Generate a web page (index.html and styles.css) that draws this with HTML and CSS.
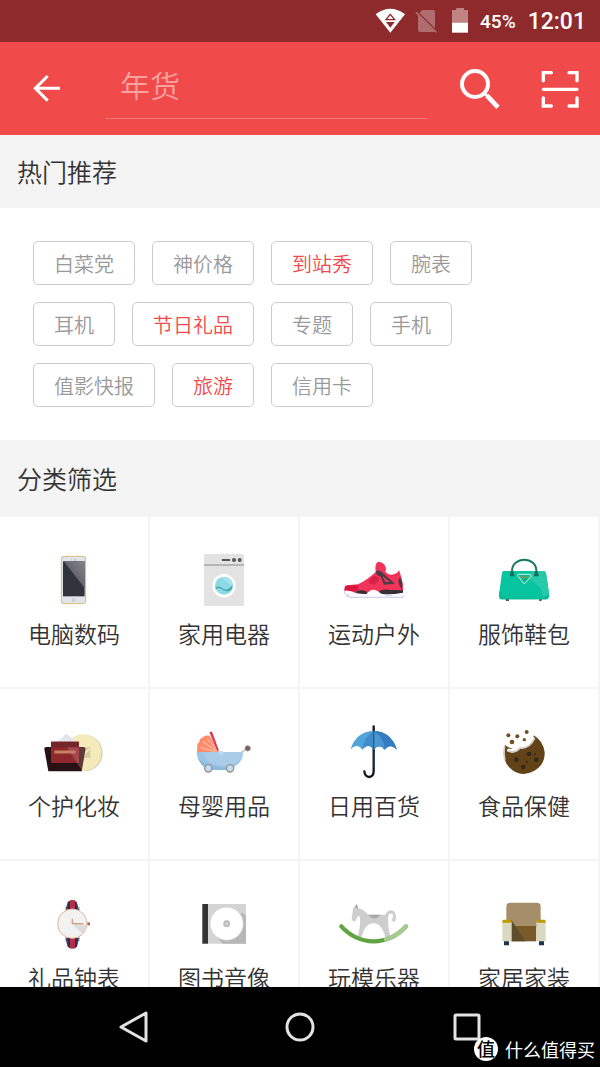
FILE: index.html
```html
<!DOCTYPE html>
<html lang="zh-CN">
<head>
<meta charset="utf-8">
<meta name="viewport" content="width=device-width, initial-scale=1">
<title>搜索</title>
<link rel="stylesheet" href="styles.css">
</head>
<body>
<div class="app">
  <div class="status">
    <svg class="status-wifi" viewBox="42 24 90 78" aria-hidden="true"><path d="M44 43Q88 10 132 43L88 98Z" fill="#fff"/><path d="M88 43L101 59H75Z" fill="#fff" stroke="#8e2a2c" stroke-width="4"/><path d="M75 66H101L88 83Z" fill="#8e2a2c"/></svg>
    <svg class="status-sim" viewBox="162 24 69 78" aria-hidden="true"><path d="M184 30H217Q222 30 222 35V85L175 39Z M171 45L221 94Q219 96 216 96H177Q171 96 171 90Z" fill="#b06d6f"/><path d="M165 37L226 97" stroke="#b06d6f" stroke-width="5"/></svg>
    <svg class="status-battery" viewBox="270 24 54 78" aria-hidden="true"><path d="M286 24H309V30H321V68H273V30H286Z" fill="#c18484"/><path d="M273 68H321V98H273Z" fill="#fff"/></svg>
    <span class="status-percent">45%</span>
    <span class="status-time">12:01</span>
  </div>
  <header class="toolbar">
    <button class="icon-button" aria-label="返回"><svg class="icon-back" viewBox="99 102 84 87"><path d="M180 145H107M143 108L106 145L143 182" fill="none" stroke="#fff" stroke-width="9"/></svg></button>
    <input class="search" type="text" placeholder="年货" aria-label="搜索">
    <button class="icon-button icon-button-search" aria-label="搜索"><svg class="icon-search" viewBox="297 201 126 126"><circle cx="345" cy="249" r="39" fill="none" stroke="#fff" stroke-width="12"/><path d="M374 278L383 286" stroke="#fff" stroke-width="9"/><path d="M381 284L414 319" stroke="#fff" stroke-width="14"/></svg></button>
    <button class="icon-button" aria-label="扫一扫"><svg class="icon-scan" viewBox="540 204 120 120"><path d="M550 239V215H574M627 215H651V239M550 291V315H574M627 315H651V291M550 265H651" fill="none" stroke="#fff" stroke-width="10" stroke-linecap="round"/></svg></button>
  </header>
  <main class="content">
    <h2 class="section-title">热门推荐</h2>
    <div class="tags">
      <div class="tag-row"><button class="tag">白菜党</button><button class="tag">神价格</button><button class="tag tag-hot">到站秀</button><button class="tag">腕表</button></div>
      <div class="tag-row"><button class="tag">耳机</button><button class="tag tag-hot">节日礼品</button><button class="tag">专题</button><button class="tag">手机</button></div>
      <div class="tag-row"><button class="tag">值影快报</button><button class="tag tag-hot">旅游</button><button class="tag">信用卡</button></div>
    </div>
    <h2 class="section-title section-title-tall">分类筛选</h2>
    <div class="grid">
      <a class="cell" href="#"><svg class="cell-icon" viewBox="114 60 216 180" aria-hidden="true">
        <defs><linearGradient id="glare" x1="0" y1="1" x2="1" y2="0"><stop offset="0" stop-color="#45474f"/><stop offset="1" stop-color="#85868b"/></linearGradient></defs>
        <rect x="184" y="79" width="73" height="142" rx="7" fill="#e3e4ea" stroke="#d7bd78" stroke-width="3"/><rect x="189" y="94" width="65" height="105" fill="#30333c"/><path d="M191 94H254V174Z" fill="url(#glare)"/><path d="M213 90H216M221 90H231" stroke="#c3c4ca" stroke-width="4"/><rect x="217" y="206" width="8" height="8" fill="#dfe0e5" stroke="#bfc0c6" stroke-width="2"/></svg><span>电脑数码</span></a>
      <a class="cell" href="#"><svg class="cell-icon" viewBox="564 60 216 180" aria-hidden="true">
        <rect x="612" y="72" width="120" height="156" rx="6" fill="#e3e3e3"/><path d="M612 105H732" stroke="#b5b6b5" stroke-width="6"/><path d="M668 90H688" stroke="#56584c" stroke-width="6" stroke-linecap="round"/><circle cx="702" cy="90" r="6" fill="#56584c"/><circle cx="719" cy="90" r="6" fill="#56584c"/><circle cx="672" cy="167" r="35" fill="#fff"/><circle cx="672" cy="167" r="27" fill="#8dd9e6"/><path d="M662 142Q690 136 697 158Q697 171 695 168Z" fill="#a7e2eb"/><path d="M646 173Q656 164 670 176Q682 184 697 165L696 178Q685 189 670 181Q659 171 647 178Z" fill="#4fa7b4"/></svg><span>家用电器</span></a>
      <a class="cell" href="#"><svg class="cell-icon" viewBox="114 60 216 180" aria-hidden="true">
        <path d="M134 185Q131 168 141 166L174 163Q200 151 227 126Q223 96 237 95Q257 99 258 118L256 125Q264 134 273 134Q292 133 297 120Q304 139 309 163V191H134Z" fill="#f23459"/><path d="M137 167L174 165Q178 177 167 184H134Q132 174 137 167Z" fill="#d81842"/><path d="M207 151L219 139Q233 135 238 151L223 164L207 159Z" fill="#d82148"/><path d="M300 141L306 155V181L298 165Q292 151 300 141Z" fill="#483a44"/><path d="M227 126Q236 117 246 127L285 161L252 164L242 140L231 135Z" fill="#4b3d46"/><path d="M247 137L270 156L257 157Z" fill="#f23459"/><path d="M167 185Q184 177 198 184L203 193H174Z M235 187Q247 175 272 180L309 181V189L258 196Z" fill="#353038"/><path d="M134 182Q149 180 169 190L199 193Q208 178 223 179Q235 182 244 192Q276 195 309 188V204H145Q132 197 134 182Z" fill="#fbfaff"/><path d="M133 188Q138 201 151 202H309V195M256 196H276M140 195H149" fill="none" stroke="#cbc9ed" stroke-width="3"/></svg><span>运动户外</span></a>
      <a class="cell" href="#"><svg class="cell-icon" viewBox="564 60 216 180" aria-hidden="true">
        <path d="M616 205H627V213H618ZM717 205H727L724 213H718Z" fill="#54545a"/><path d="M611 123H731Q736 123 738 130L747 190Q748 208 738 208H606Q597 208 597 194L606 128Q607 123 611 123Z" fill="#06c49d"/><path d="M699 123H731Q736 123 738 130L747 190Q748 208 738 208H729Q732 174 690 150Z" fill="#27caa8"/><path d="M598 182L597 197Q597 208 606 208H738Q748 206 747 193Q732 204 710 205H625Q604 204 598 182Z" fill="#08b995"/><path d="M636 137V123C637 78 709 78 709 123V137" fill="none" stroke="#167a62" stroke-width="6"/><path d="M629 139L632 124H640L644 139ZM701 139L705 124H713L717 139Z" fill="#176f5a"/><path d="M653 136Q652 133 656 133H689Q695 133 693 139L676 159Q673 163 669 158Z" fill="#12b48f" stroke="#d3f6eb" stroke-width="3"/><path d="M660 142H686" stroke="#91a452" stroke-width="4" stroke-dasharray="4 2"/></svg><span>服饰鞋包</span></a>

      <a class="cell" href="#"><svg class="cell-icon" viewBox="114 35 216 180" aria-hidden="true">
        <circle cx="253" cy="128" r="55" fill="#d6ceb1"/><circle cx="249" cy="127" r="55" fill="#f5eab9"/><rect x="239" y="111" width="32" height="32" fill="#d9cda3"/><path d="M243 140L268 116" stroke="#f5eab9" stroke-width="5"/><path d="M167 95L189 81L195 70L203 74Q209 81 219 84L228 95Z" fill="#e9e8ed"/><path d="M190 87L202 75L213 90" fill="none" stroke="#d4d3da" stroke-width="3"/><path d="M133 116Q132 110 139 110H249Q257 110 256 117L245 183H145Z" fill="#281114"/><rect x="153" y="94" width="84" height="64" rx="3" fill="#8f282d"/><path d="M153 94H237V111H153Z" fill="#74272b"/><path d="M163 125H227" stroke="#ca7d67" stroke-width="9"/><path d="M201 111H256L245 180Z" fill="#c47c78" opacity=".38"/></svg><span>个护化妆</span></a>
      <a class="cell" href="#"><svg class="cell-icon" viewBox="564 35 216 180" aria-hidden="true">
        <path d="M591 125L592 108Q590 100 598 96Q598 84 607 82Q614 73 629 76L657 125Z" fill="#ff8b68"/><path d="M609 94L650 123M600 111L644 124M621 85L654 121" stroke="#ffb79f" stroke-width="4"/><path d="M628 65L636 64L657 121L651 120Z" fill="#d9364a"/><path d="M590 125H729C732 196 590 200 590 125Z" fill="#9bc5e4"/><path d="M609 125H729C726 182 617 177 609 125Z" fill="#a9cce8"/><path d="M595 145Q607 176 630 179H692L705 170Q644 179 595 145Z" fill="#8bbadf"/><path d="M723 127L738 117" stroke="#bfc9ce" stroke-width="5"/><circle cx="743" cy="114" r="8" fill="#71605d" stroke="#a69c98" stroke-width="3"/><circle cx="663" cy="128" r="7" fill="#badcf0"/><circle cx="625" cy="174" r="11" fill="#c2ddef" stroke="#9b9290" stroke-width="4"/><circle cx="690" cy="174" r="11" fill="#c2ddef" stroke="#9b9290" stroke-width="4"/></svg><span>母婴用品</span></a>
      <a class="cell" href="#"><svg class="cell-icon" viewBox="114 35 216 180" aria-hidden="true">
        <path d="M221 48V181Q221 199 207 200Q195 199 193 183" fill="none" stroke="#101722" stroke-width="7" stroke-linecap="round"/><path d="M151 118Q169 63 221 62Q273 63 291 118Q268 95 254 118Q238 96 221 118Q205 95 187 118Q171 96 151 118Z" fill="#51a4d8"/><path d="M221 62V118Q238 98 254 118Q270 97 291 118Q273 63 221 62Z" fill="#347bc0"/><path d="M221 62V118Q205 96 187 118Q192 80 221 62Z" fill="#3f8bcb"/><path d="M221 62V118Q238 98 254 118Q253 82 221 62Z" fill="#4b95d0"/><path d="M221 62V118" stroke="#275d91" stroke-width="4"/><path d="M222 122V173" stroke="#315d7a" stroke-width="2"/></svg><span>日用百货</span></a>
      <a class="cell" href="#"><svg class="cell-icon" viewBox="564 35 216 180" aria-hidden="true">
        <path d="M615 104Q604 145 626 169Q659 205 702 182Q735 163 734 126Q730 92 701 75Q701 103 665 107Q650 129 615 104Z" fill="#624317"/><path d="M622 118Q646 128 659 109Q685 114 701 81" fill="none" stroke="#fff" stroke-width="10"/><path d="M625 122Q645 130 660 113Q688 116 704 84M614 107Q610 130 615 150" fill="none" stroke="#d1cbc5" stroke-width="5"/><g fill="#70501e"><circle cx="625" cy="75" r="6"/><circle cx="652" cy="78" r="6"/><circle cx="680" cy="65" r="6"/><circle cx="673" cy="88" r="5"/><circle cx="636" cy="95" r="7"/></g><g fill="#352818"><circle cx="649" cy="148" r="7"/><circle cx="687" cy="131" r="7"/><circle cx="709" cy="148" r="7"/><circle cx="670" cy="170" r="7"/><circle cx="705" cy="132" r="3"/><circle cx="681" cy="154" r="3"/></g></svg><span>食品保健</span></a>

      <a class="cell" href="#"><svg class="cell-icon" viewBox="114 40 216 180" aria-hidden="true">
        <path d="M196 90L203 64Q217 53 230 64L238 90ZM196 171H238L231 198Q217 209 203 198Z" fill="#292d50"/><path d="M210 59H225V90H210ZM210 170H225V203H210Z" fill="#b72e46"/><path d="M204 67L201 85M230 67L233 84M201 176L205 195M233 176L230 195" stroke="#858bab" stroke-width="2" stroke-dasharray="2 3"/><path d="M197 78V95M238 78V95M197 165V182M238 165V182" stroke="#dfb393" stroke-width="3"/><circle cx="217" cy="129" r="44" fill="#f2f2f3" stroke="#e2b699" stroke-width="3"/><path d="M217 131L250 129L260 137Q257 148 247 159Z" fill="#dcdcde"/><path d="M217 114V129H250" fill="none" stroke="#d39b7c" stroke-width="4"/><path d="M262 125H270V134H262" fill="#b16e51"/></svg><span>礼品钟表</span></a>
      <a class="cell" href="#"><svg class="cell-icon" viewBox="564 40 216 180" aria-hidden="true">
        <path d="M607 70H738V189H607Z" fill="#d4d4d4"/><path d="M727 95L738 107V189H668L646 164Z" fill="#b7b7b7"/><path d="M607 70H624V189H607Z" fill="#343434"/><circle cx="680" cy="129" r="50" fill="#fff" stroke="#c8c8c8" stroke-width="2"/><circle cx="680" cy="129" r="8" fill="#d0d0d0" stroke="#b6b6b6" stroke-width="4"/></svg><span>图书音像</span></a>
      <a class="cell" href="#"><svg class="cell-icon" viewBox="114 40 216 180" aria-hidden="true">
        <path d="M173 169Q182 137 180 111Q173 100 168 120Q159 126 155 116L159 83L170 71L174 83Q190 84 204 102H255Q267 83 281 91Q294 104 284 125L274 119Q282 109 277 99Q265 96 264 112Q263 139 271 169L256 171Q247 129 221 128Q192 129 184 175Z" fill="#cecece"/><path d="M166 80L170 71L174 83Z" fill="#8f8f8f"/><path d="M204 102H241Q232 114 222 113Q212 113 204 102Z" fill="#a8a8a8"/><path d="M124 137Q164 181 221 182Q278 181 318 137" fill="none" stroke="#62a442" stroke-width="13" stroke-linecap="round"/><path d="M258 177Q295 165 318 137" fill="none" stroke="#a4cb90" stroke-width="13" stroke-linecap="round"/></svg><span>玩模乐器</span></a>
      <a class="cell" href="#"><svg class="cell-icon" viewBox="564 40 216 180" aria-hidden="true">
        <rect x="619" y="66" width="103" height="75" rx="12" fill="#a68e6a"/><path d="M634 136H709V182H634Z" fill="#795b28"/><path d="M634 118L677 182H634Z" fill="#5f4c2e"/><path d="M607 123H635V182H607ZM709 123H737V182H709Z" fill="#dad8c0"/><path d="M607 126V121Q607 117 612 117H632L635 126ZM709 126L712 117H733Q738 117 737 126Z" fill="#bd9b07"/><path d="M612 182H627V194H612ZM717 182H732V194H717Z" fill="#17364c"/></svg><span>家居家装</span></a>
    </div>
  </main>
  <nav class="navbar" aria-label="系统导航">
    <button class="nav-button" aria-label="返回"><svg class="nav-icon" viewBox="0 0 36 36"><path d="M31 4V32L6 18Z" fill="none" stroke="#e4e2e4" stroke-width="3" stroke-linejoin="round"/></svg></button>
    <button class="nav-button" aria-label="主屏幕"><svg class="nav-icon" viewBox="0 0 36 36"><circle cx="18" cy="18" r="13" fill="none" stroke="#e4e2e4" stroke-width="3"/></svg></button>
    <button class="nav-button" aria-label="最近任务"><svg class="nav-icon" viewBox="0 0 36 36"><rect x="6" y="6" width="24" height="24" rx="1" fill="none" stroke="#e4e2e4" stroke-width="3"/></svg></button>
    <div class="brand"><span class="brand-badge">值</span><span>什么值得买</span></div>
  </nav>
</div>
</body>
</html>
```
FILE: styles.css
```css
* { box-sizing: border-box; }
body { margin: 0; font-family: "Noto Sans CJK SC", sans-serif; font-weight: 350; color: #333; background: #fff; }
button { margin: 0; padding: 0; border: 0; background: none; font: inherit; }
svg { display: block; }
.app { display: flex; flex-direction: column; height: 100vh; }

.status { display: flex; flex: none; align-items: center; justify-content: flex-end; height: 42px; padding-right: 14px; background: #8e2a2c; color: #fff; font-family: Roboto, sans-serif; font-weight: 500; }
.status-wifi { width: 30px; height: 26px; }
.status-sim { width: 23px; height: 26px; margin-left: 10px; }
.status-battery { width: 18px; height: 26px; margin-left: 13px; }
.status-percent { margin-left: 11px; padding-top: 2px; font-size: 19px; line-height: 40px; }
.status-time { margin-left: 12px; padding-top: 2px; font-size: 23px; line-height: 40px; }

.toolbar { display: flex; flex: none; align-items: center; height: 93px; padding: 0 20px 0 33px; background: #f14a4a; }
.icon-button { flex: none; }
.icon-back { width: 28px; height: 29px; }
.search { flex: 1; min-width: 0; height: 60px; margin: 0 32px 0 45px; padding: 0 15px 8px 14px; border: 0; border-bottom: 1px solid #f57777; border-radius: 0; outline: 0; background: none; color: #fff; font: inherit; font-size: 30px; }
.search::placeholder { color: #f9a2a2; opacity: 1; }
.icon-button-search { margin-right: 39px; }
.icon-search { width: 42px; height: 42px; }
.icon-scan { width: 40px; height: 40px; }

.content { flex: 1; min-height: 0; overflow: hidden; }
.section-title { margin: 0; padding: 0 17px; background: #f4f4f4; font-size: 25px; font-weight: inherit; line-height: 73px; }
.section-title-tall { line-height: 77px; }
.tags { display: flex; flex-direction: column; gap: 17px; padding: 33px; }
.tag-row { display: flex; flex-wrap: wrap; gap: 17px; }
.tag { height: 44px; padding: 2px 20px 0; border: 1px solid #ccc; border-radius: 5px; color: #999; font-size: 20px; line-height: 40px; }
.tag-hot { color: #f14a4a; }

.grid { display: grid; grid-template-columns: repeat(4, 1fr); }
.cell { display: flex; flex-direction: column; align-items: center; height: 172px; padding-top: 33px; border-right: 2px solid #f4f4f4; border-bottom: 2px solid #f4f4f4; color: #333; font-size: 23px; line-height: 34px; text-decoration: none; }
.cell-icon { width: 72px; height: 60px; margin-bottom: 6px; }

.navbar { position: relative; display: flex; flex: none; align-items: center; justify-content: center; gap: 131px; height: 80px; background: #000; }
.nav-icon { width: 36px; height: 36px; }
.brand { position: absolute; right: 5px; bottom: 4px; display: flex; align-items: center; gap: 7px; color: #fff; font-size: 18px; font-weight: 400; line-height: 28px; }
.brand-badge { width: 24px; height: 24px; border-radius: 50%; background: #fff; color: #000; font-size: 18px; font-weight: 500; line-height: 22px; text-align: center; }
```
